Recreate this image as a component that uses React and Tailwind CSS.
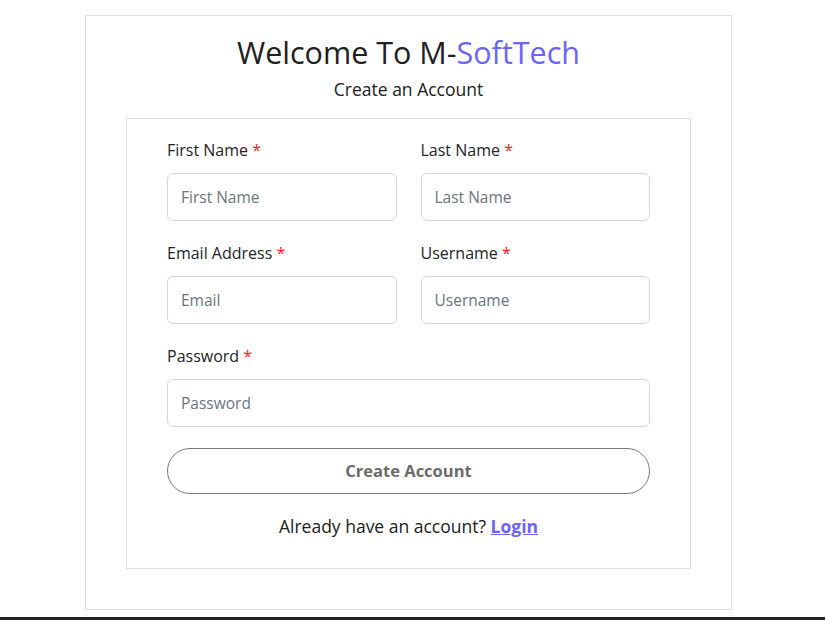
export default function App() {
  const labelCls = "block text-[16px] leading-6 text-[#212529] mb-[11px]";
  const inputCls =
    "w-full h-[48px] rounded-md border border-[#d4d7dc] px-[13px] text-[15.5px] text-[#212529] placeholder:text-[#6c757d] outline-none";

  return (
    <div className="min-h-[620px] bg-white flex flex-col font-['Open_Sans',sans-serif]">
      <div className="pt-[15px] pl-[85px]">
        <div className="w-[647px] border border-[#dedede] px-[40px] pt-[14px] pb-[40px]">
          {/* Header */}
          <h1 className="text-center text-[30.5px] leading-[45px] text-[#212121]">
            Welcome To M-<span className="text-[#6c63ff]">SoftTech</span>
          </h1>
          <p className="text-center text-[17.5px] leading-6 text-[#212121] mt-[2px]">
            Create an Account
          </p>

          {/* Form */}
          <div className="mt-[17px] border border-[#dedede] px-[40px] pt-[19px] pb-[30px]">
            <div className="grid grid-cols-2 gap-x-[24px] gap-y-[20px]">
              <div>
                <label className={labelCls}>
                  First Name <span className="text-[#ff2222]">*</span>
                </label>
                <input className={inputCls} placeholder="First Name" />
              </div>
              <div>
                <label className={labelCls}>
                  Last Name <span className="text-[#ff2222]">*</span>
                </label>
                <input className={inputCls} placeholder="Last Name" />
              </div>
              <div>
                <label className={labelCls}>
                  Email Address <span className="text-[#ff2222]">*</span>
                </label>
                <input className={inputCls} placeholder="Email" />
              </div>
              <div>
                <label className={labelCls}>
                  Username <span className="text-[#ff2222]">*</span>
                </label>
                <input className={inputCls} placeholder="Username" />
              </div>
              <div className="col-span-2">
                <label className={labelCls}>
                  Password <span className="text-[#ff2222]">*</span>
                </label>
                <input className={inputCls} type="password" placeholder="Password" />
              </div>
            </div>

            <button className="mt-[21px] w-full h-[46px] rounded-full border border-[#777] bg-white text-[16.5px] font-bold text-[#6b6b6b]">
              Create Account
            </button>

            <p className="mt-[20px] text-center text-[17.5px] leading-6 text-[#212121]">
              Already have an account?{" "}
              <a href="#" className="font-bold text-[#6c63ff] underline">
                Login
              </a>
            </p>
          </div>
        </div>
      </div>
      <div className="mt-[7px] h-[10px] bg-[#222]" />
    </div>
  );
}
